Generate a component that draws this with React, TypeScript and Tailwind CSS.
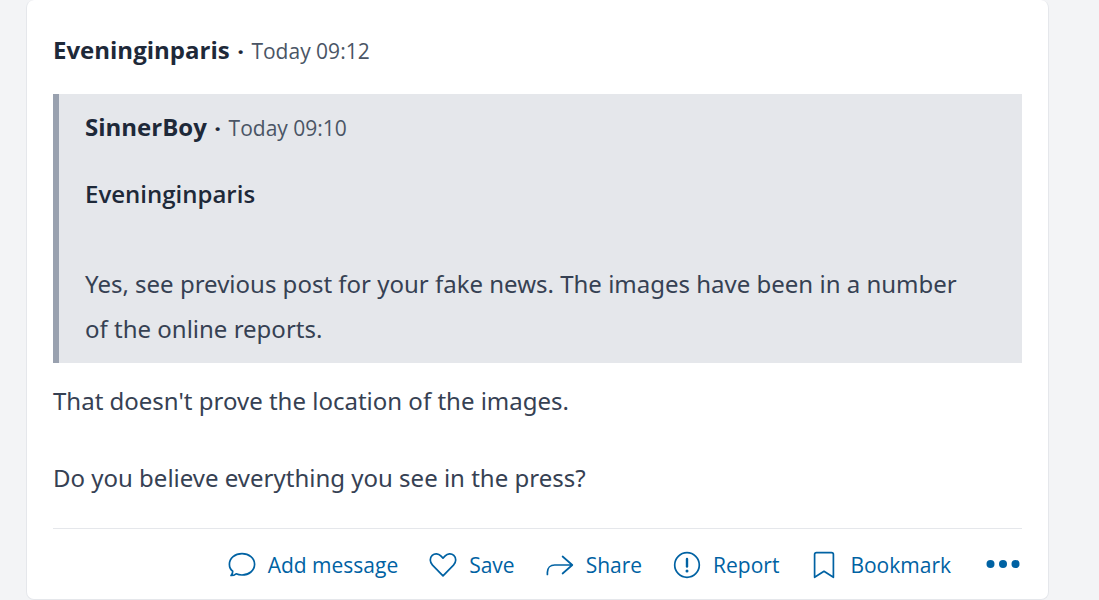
import type { ReactNode } from "react";

type ActionProps = { label: string; children: ReactNode };

function Action({ label, children }: ActionProps) {
  return (
    <button type="button" className="flex cursor-pointer items-center gap-3">
      <svg
        viewBox="0 0 28 28"
        className="size-7 shrink-0"
        fill="none"
        stroke="currentColor"
        strokeWidth="1.7"
        strokeLinecap="round"
        strokeLinejoin="round"
        aria-hidden="true"
      >
        {children}
      </svg>
      <span>{label}</span>
    </button>
  );
}

function Byline({ author, time }: { author: string; time: string }) {
  return (
    <header className="flex items-baseline gap-2 font-['Open_Sans',sans-serif] leading-9">
      <span className="text-2xl leading-9 font-bold text-gray-800">{author}</span>
      <span className="text-xl leading-9 font-extrabold text-gray-800">·</span>
      <time className="text-[21px] text-gray-600">{time}</time>
    </header>
  );
}

export default function App() {
  return (
    <main className="min-h-screen bg-gray-100 pr-[50px] pl-[26px] font-['Noto_Sans',sans-serif] text-gray-700">
      <article className="min-h-screen rounded-lg border border-t-0 border-gray-200 bg-white px-[26px] pt-8 pb-4">
        <Byline author="Eveninginparis" time="Today 09:12" />
        <blockquote className="mt-6 border-l-6 border-gray-400 bg-gray-200 pt-[15px] pr-10 pb-3 pl-[26px]">
          <Byline author="SinnerBoy" time="Today 09:10" />
          <p className="mt-6 font-['Open_Sans',sans-serif] text-2xl leading-[45px] font-semibold text-gray-800">Eveninginparis</p>
          <p className="mt-[45px] text-2xl leading-[45px]">
            Yes, see previous post for your fake news. The images have been in a number of the online reports.
          </p>
        </blockquote>
        <p className="mt-[15px] text-2xl leading-[45px]">That doesn't prove the location of the images.</p>
        <p className="mt-8 text-2xl leading-[45px]">Do you believe everything you see in the press?</p>
        <footer className="mt-7 flex items-center justify-end gap-[31px] border-t border-gray-200 pt-[18px] font-['Open_Sans',sans-serif] text-[21px] leading-9 text-[#0062a3]">
          <Action label="Add message">
            <path d="M3 24.5C4.3 23.2 4.8 21.6 4.7 20.3C2.6 18.7 1.4 16.5 1.4 13.3C1.4 7.1 7 2.6 14 2.6S26.6 7.1 26.6 13.3S21 24 14 24C11.9 24 9.9 23.6 8.1 22.8C6.7 23.9 4.9 24.6 3 24.5Z" />
          </Action>
          <Action label="Save">
            <path d="M14 24.9L3.5 14.1C.6 11.2.6 6.8 3.2 4.4C5.7 2 9.5 2.4 11.8 4.8L14 7.1L16.2 4.8C18.5 2.4 22.3 2 24.8 4.4C27.4 6.8 27.4 11.2 24.5 14.1Z" />
          </Action>
          <Action label="Share">
            <path d="M1.4 23.5V21.3C1.4 17 4.4 14 8.7 14H26.3M16.6 5.5L26.3 14L16.6 22.5" />
          </Action>
          <Action label="Report">
            <circle cx="14" cy="14" r="12.3" />
            <path d="M14 8V15.5" strokeWidth="2.4" />
            <circle cx="14" cy="20" r="1.5" fill="currentColor" stroke="none" />
          </Action>
          <Action label="Bookmark">
            <path d="M4.6 26.3V3.6Q4.6 1.7 6.5 1.7H21.5Q23.4 1.7 23.4 3.6V26.3L14 20.3Z" />
          </Action>
          <button type="button" aria-label="More options" className="cursor-pointer">
            <svg viewBox="0 0 40 12" className="h-3 w-10" fill="currentColor" aria-hidden="true">
              <circle cx="8.5" cy="5" r="4" />
              <circle cx="21" cy="5" r="4" />
              <circle cx="33.5" cy="5" r="4" />
            </svg>
          </button>
        </footer>
      </article>
    </main>
  );
}
